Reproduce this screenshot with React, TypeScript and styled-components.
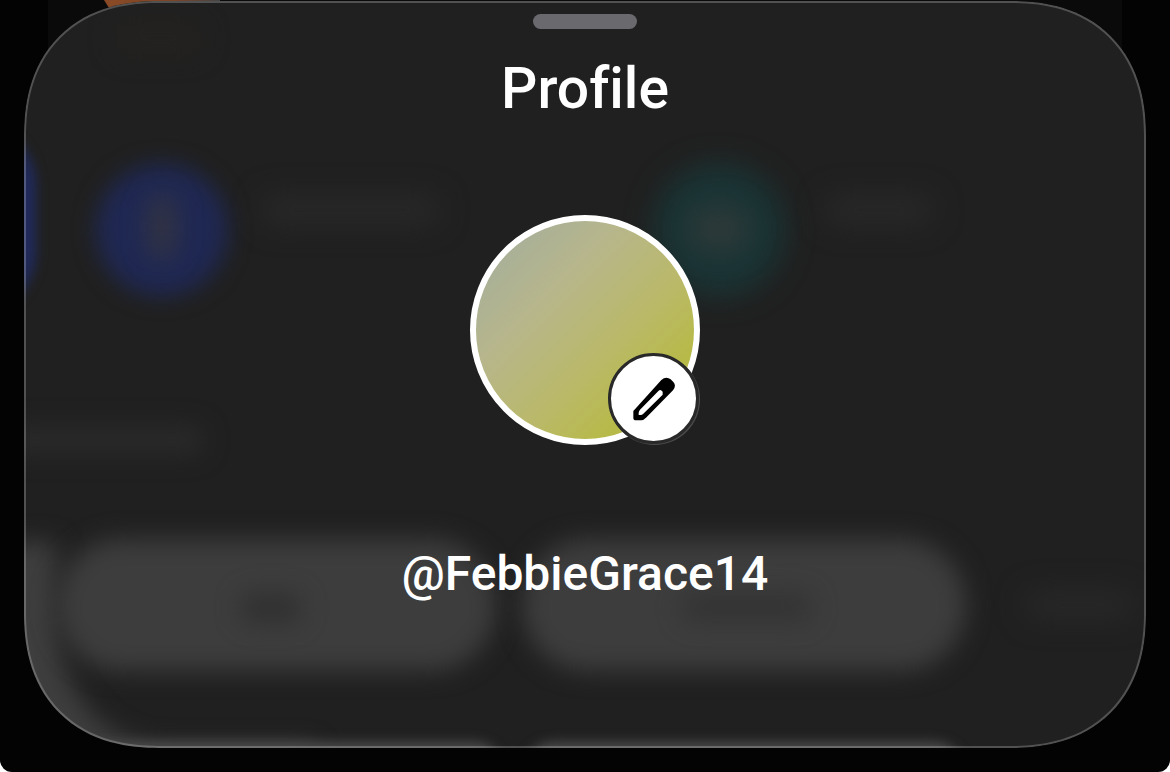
import React from "react";
import styled, { createGlobalStyle } from "styled-components";

const GlobalStyle = createGlobalStyle`
  *, *::before, *::after { box-sizing: border-box; }
  html { background: #fff; }
  body { margin: 0; font-family: Roboto, "Liberation Sans", Arial, sans-serif; }
`;

const Screen = styled.main`
  position: relative;
  min-height: 100vh;
  padding: 1px 24px 24px;
  overflow: hidden;
  border-radius: 0 0 12px 12px;
  background: linear-gradient(#0a0a0a, #0a0a0a) 50% 0 / calc(100% - 96px) 120px no-repeat #030303;
`;

/* Artwork of the page underneath that peeks out above the sheet */
const Peek = styled.div`
  position: absolute;
  top: 0;
  left: 104px;
  width: 116px;
  height: 8px;
  background: linear-gradient(90deg, #8a4a26, #7c4527 60%, #444);
  clip-path: polygon(0 0, 100% 0, 100% 100%, 5px 100%);
`;

const Sheet = styled.section`
  position: relative;
  isolation: isolate;
  display: flex;
  flex-direction: column;
  align-items: center;
  padding: 13px 24px 146px;
  overflow: hidden;
  background: #202020;
  border-radius: 114px;

  @supports (corner-shape: superellipse(1.2)) {
    border-radius: 135px;
    corner-shape: superellipse(1.2);
  }

  &::after {
    content: "";
    position: absolute;
    inset: 0;
    border: 2px solid rgba(255, 255, 255, 0.22);
    border-radius: inherit;
    corner-shape: inherit;
    pointer-events: none;
  }
`;

const Backdrop = styled.div`
  position: absolute;
  inset: 0;
  z-index: -1;
`;

interface GlowProps {
  $x: number;
  $y: number;
  $w: number;
  $h: number;
  $color: string;
  $blur: number;
}

const Glow = styled.div<GlowProps>`
  position: absolute;
  left: ${(p) => p.$x}px;
  top: ${(p) => p.$y}px;
  width: ${(p) => p.$w}px;
  height: ${(p) => p.$h}px;
  border-radius: 999px;
  background: ${(p) => p.$color};
  filter: blur(${(p) => p.$blur}px);
`;

const Grabber = styled.button`
  width: 104px;
  height: 15px;
  padding: 0;
  border: 0;
  border-radius: 8px;
  background: #6a696e;
`;

const Title = styled.h1`
  margin: 28px 0 0;
  color: #fff;
  font-size: 57px;
  font-weight: 500;
  font-variant-ligatures: none;
  line-height: 64px;
`;

const AvatarFrame = styled.div`
  position: relative;
  width: 230px;
  height: 230px;
  margin-top: 94px;
`;

const Avatar = styled.div`
  width: 100%;
  height: 100%;
  border: 6px solid #fff;
  border-radius: 50%;
  background: linear-gradient(135deg, #a3ae9c 8%, #b7b68c 34%, #bab968 60%, #b7ba48 78%) border-box;
`;

const EditButton = styled.button`
  position: absolute;
  right: 1px;
  bottom: 1px;
  display: grid;
  place-items: center;
  width: 91px;
  height: 91px;
  padding: 0;
  border: 3px solid #29292a;
  border-radius: 50%;
  background: #fff;
  box-shadow: 1px 1px 0 #4c4c4c;
  color: #000;
`;

const Username = styled.p`
  margin: 101px 0 0;
  color: #fff;
  font-size: 48px;
  font-weight: 500;
  line-height: 56px;
`;

const glows: GlowProps[] = [
  { $x: 72, $y: 163, $w: 132, $h: 132, $color: "#1f2853", $blur: 11 },
  { $x: 126, $y: 194, $w: 24, $h: 64, $color: "#35353f", $blur: 13 },
  { $x: -112, $y: 123, $w: 124, $h: 190, $color: "#202a5c", $blur: 6 },
  { $x: 630, $y: 163, $w: 130, $h: 132, $color: "#1a3435", $blur: 14 },
  { $x: 665, $y: 206, $w: 60, $h: 44, $color: "#2e3939", $blur: 14 },
  { $x: 236, $y: 194, $w: 180, $h: 30, $color: "#282828", $blur: 14 },
  { $x: 800, $y: 194, $w: 110, $h: 30, $color: "#282828", $blur: 14 },
  { $x: -20, $y: 425, $w: 200, $h: 28, $color: "#2a2a2a", $blur: 12 },
  { $x: 90, $y: 20, $w: 90, $h: 34, $color: "#242220", $blur: 12 },
  { $x: 32, $y: 538, $w: 440, $h: 132, $color: "#3d3d3d", $blur: 12 },
  { $x: 498, $y: 538, $w: 444, $h: 132, $color: "#3d3d3d", $blur: 12 },
  { $x: 216, $y: 592, $w: 62, $h: 30, $color: "#303030", $blur: 12 },
  { $x: 658, $y: 592, $w: 130, $h: 28, $color: "#333333", $blur: 12 },
  { $x: 1000, $y: 590, $w: 110, $h: 28, $color: "#282828", $blur: 14 },
  { $x: 20, $y: 741, $w: 460, $h: 60, $color: "#4a4a4a", $blur: 6 },
  { $x: 500, $y: 741, $w: 440, $h: 60, $color: "#4a4a4a", $blur: 6 },
];

const EdgeShade = styled.div`
  position: absolute;
  left: -30px;
  bottom: -40px;
  width: 320px;
  height: 246px;
  border: solid #3e3e3e;
  border-width: 0 0 42px 62px;
  border-radius: 0 0 0 170px;
  filter: blur(12px);
`;

function PencilIcon() {
  return (
    <svg width="44" height="44" viewBox="0 0 132 132" aria-hidden="true">
      <path
        fill="currentColor"
        fillRule="evenodd"
        d="M4 102 L88 9 Q102 -4 116 7 L124 15 Q134 26 123 40 L42 122 Q34 130 28 130 L12 130 Q4 130 4 122 Z M80 41 L24 98 Q20 103 20 108 L20 114 L26 114 Q30 114 34 110 L92 53 L92 44 Q86 36 80 41 Z"
      />
    </svg>
  );
}

export default function App() {
  return (
    <>
      <GlobalStyle />
      <Screen>
        <Peek />
        <Sheet aria-labelledby="profile-title">
          <Backdrop aria-hidden="true">
            <EdgeShade />
            {glows.map((glow, i) => (
              <Glow key={i} {...glow} />
            ))}
          </Backdrop>
          <Grabber type="button" aria-label="Close sheet" />
          <Title id="profile-title">Profile</Title>
          <AvatarFrame>
            <Avatar role="img" aria-label="Profile picture" />
            <EditButton type="button" aria-label="Edit profile picture">
              <PencilIcon />
            </EditButton>
          </AvatarFrame>
          <Username>@FebbieGrace14</Username>
        </Sheet>
      </Screen>
    </>
  );
}
